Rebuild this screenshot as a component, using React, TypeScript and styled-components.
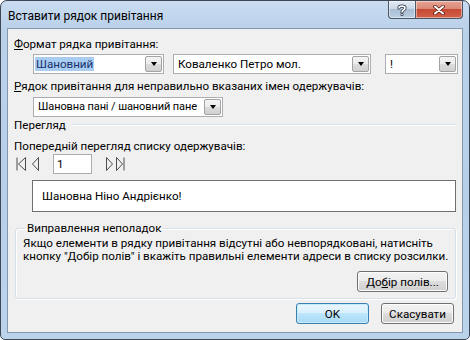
import styled, { createGlobalStyle } from 'styled-components';

const GlobalStyle = createGlobalStyle`
  html, body {
    margin: 0;
    padding: 0;
    background: #ffffff;
  }
  body {
    font-family: Roboto, 'Noto Sans', 'Liberation Sans', sans-serif;
    font-size: 11.6px;
    line-height: 16px;
    color: #000;
  }
`;

const Window = styled.div`
  box-sizing: border-box;
  width: 470px;
  height: 340px;
  border: 1px solid #3d4756;
  border-radius: 7px 7px 5px 5px;
  background: linear-gradient(180deg, #cadcf0 0px, #bad1ea 28px, #b7cfe9 200px, #bcd3ec 100%);
  display: flex;
  flex-direction: column;
  overflow: hidden;
`;

const TitleBar = styled.div`
  height: 27px;
  display: flex;
  align-items: flex-start;
  padding-left: 7px;
`;

const Title = styled.div`
  flex: 1;
  padding-top: 7px;
  font-size: 12px;
  color: #000;
`;

const CaptionButtons = styled.div`
  display: flex;
  margin-right: 6px;
`;

const CaptionButton = styled.div<{ $close?: boolean }>`
  box-sizing: border-box;
  width: ${(p) => (p.$close ? 47 : 28)}px;
  height: 18px;
  border: 1px solid #4a5566;
  border-top: none;
  ${(p) => (p.$close ? 'border-left: none;' : '')}
  border-radius: ${(p) => (p.$close ? '0 0 4px 0' : '0 0 0 4px')};
  background: ${(p) =>
    p.$close
      ? 'linear-gradient(180deg, #e8a493 0%, #d98a78 45%, #c74a32 50%, #d2604a 100%)'
      : 'linear-gradient(180deg, #e2ebf5 0%, #c9d7e6 45%, #a9bdd3 50%, #bcd0e4 100%)'};
  box-shadow: inset 0 0 0 1px rgba(255, 255, 255, 0.45);
  display: flex;
  align-items: center;
  justify-content: center;
`;

const Client = styled.div`
  flex: 1;
  margin: 0 6px 6px;
  border: 1px solid #8596ad;
  background: #f0f0f0;
  padding: 6px 6px 0;
  display: flex;
  flex-direction: column;
  min-width: 0;
`;

const Label = styled.div<{ $top?: number }>`
  margin-top: ${(p) => p.$top ?? 0}px;
  white-space: nowrap;
`;

const ComboRow = styled.div<{ $top: number }>`
  display: flex;
  margin: ${(p) => p.$top}px -2px 0 19px;
`;

const Combo = styled.div<{ $w: number; $gap?: number }>`
  box-sizing: border-box;
  width: ${(p) => p.$w}px;
  height: 20px;
  margin-right: ${(p) => p.$gap ?? 0}px;
  border: 1px solid #abadb3;
  background: #fff;
  display: flex;
  align-items: center;
  padding: 1px;
  flex-shrink: 0;
`;

const ComboText = styled.span<{ $pad?: number; $small?: boolean }>`
  flex: 1;
  padding-left: ${(p) => p.$pad ?? 3}px;
  font-size: ${(p) => (p.$small ? '11px' : 'inherit')};
  letter-spacing: ${(p) => (p.$small ? '-0.1px' : 'normal')};
  white-space: nowrap;
  overflow: hidden;
`;

const Selected = styled.span`
  background: #a9cdf1;
  color: #17306e;
  padding: 0 1px;
`;

const DropButton = styled.div`
  box-sizing: border-box;
  width: 17px;
  align-self: stretch;
  border: 1px solid #a3a3a3;
  border-radius: 2px;
  background: linear-gradient(180deg, #f4f4f4 0%, #ebebeb 50%, #dcdcdc 50%, #d0d0d0 100%);
  display: flex;
  align-items: center;
  justify-content: center;
  flex-shrink: 0;
`;

const Arrow = styled.div`
  width: 0;
  height: 0;
  border-left: 3.5px solid transparent;
  border-right: 3.5px solid transparent;
  border-top: 4px solid #000;
`;

const SectionHead = styled.div`
  display: flex;
  align-items: center;
  gap: 6px;
`;

const SectionLine = styled.div`
  flex: 1;
  height: 0;
  border-top: 1px solid #d5dfe5;
  border-bottom: 1px solid #fff;
`;

const NavRow = styled.div`
  display: flex;
  align-items: center;
  height: 20px;
`;

const NavButton = styled.div<{ $after?: number }>`
  width: 14px;
  height: 20px;
  margin-right: ${(p) => p.$after ?? 0}px;
  display: flex;
  align-items: center;
  justify-content: center;
`;

const RecordBox = styled.div`
  box-sizing: border-box;
  width: 39px;
  height: 20px;
  margin-right: 9px;
  border: 1px solid #abadb3;
  background: #fff;
  padding-left: 3px;
  line-height: 18px;
`;

const Preview = styled.div`
  box-sizing: border-box;
  height: 32px;
  margin: 6px 0 0 18px;
  border: 1px solid #707070;
  background: #fff;
  padding-left: 9px;
  display: flex;
  align-items: center;
`;

const Group = styled.fieldset`
  min-width: 0;
  margin: 8px 0 0 1px;
  padding: 0 7px 6px 7px;
  border: 1px solid #d5dfe5;
  border-radius: 3px;
  box-shadow: inset 1px 1px 0 #fff, 1px 1px 0 #fff;
  display: flex;
  flex-direction: column;
`;

const Legend = styled.legend`
  padding: 0 2px;
  margin-left: 2px;
`;

const Help = styled.p`
  margin: 1px 0 0;
  line-height: 13px;
  white-space: nowrap;
`;

const GroupActions = styled.div`
  display: flex;
  justify-content: flex-end;
  margin-top: 8px;
`;

const Button = styled.button<{ $w: number; $default?: boolean }>`
  box-sizing: border-box;
  width: ${(p) => p.$w}px;
  height: 21px;
  padding: 0;
  font: inherit;
  color: #000;
  border: 1px solid ${(p) => (p.$default ? '#3c7fb1' : '#707070')};
  border-radius: 3px;
  background: ${(p) =>
    p.$default
      ? 'linear-gradient(180deg, #eaf6fd 0%, #d9f0fc 50%, #bee6fd 50%, #a7d9f5 100%)'
      : 'linear-gradient(180deg, #f2f2f2 0%, #ebebeb 50%, #dddddd 50%, #cfcfcf 100%)'};
  box-shadow: inset 0 0 0 1px ${(p) => (p.$default ? '#c5ecfc' : '#fcfcfc')};
`;

const Footer = styled.div`
  display: flex;
  justify-content: flex-end;
  gap: 12px;
  margin: 4px 2px 0 0;
`;

const HelpGlyph = () => (
  <svg width="10" height="12" viewBox="0 0 10 12">
    <path
      d="M2 4 C2 1.5 8 1.5 8 4 C8 6 5 6 5 8"
      fill="none"
      stroke="#2a3546"
      strokeWidth="3.2"
      strokeLinecap="round"
    />
    <path
      d="M2 4 C2 1.5 8 1.5 8 4 C8 6 5 6 5 8"
      fill="none"
      stroke="#fff"
      strokeWidth="1.6"
      strokeLinecap="round"
    />
    <circle cx="5" cy="10.6" r="1.5" fill="#2a3546" />
    <circle cx="5" cy="10.6" r="0.8" fill="#fff" />
  </svg>
);

const CloseGlyph = () => (
  <svg width="12" height="10" viewBox="0 0 12 10">
    <path d="M2 1.5 L10 8.5 M10 1.5 L2 8.5" stroke="#5a1a10" strokeWidth="3.6" strokeLinecap="round" />
    <path d="M2 1.5 L10 8.5 M10 1.5 L2 8.5" stroke="#fff" strokeWidth="2" strokeLinecap="round" />
  </svg>
);

const NavIcon = ({ dir, bar }: { dir: 'left' | 'right'; bar?: boolean }) => {
  const tri =
    dir === 'left'
      ? bar
        ? '11.5,3.5 4.5,10 11.5,16.5'
        : '10.5,3.5 4.5,10 10.5,16.5'
      : bar
        ? '1.5,3.5 7.5,10 1.5,16.5'
        : '5.5,3.5 11.5,10 5.5,16.5';
  return (
    <svg width="14" height="20" viewBox="0 0 14 20">
      <polygon points={tri} fill="none" stroke="#4d4d4d" strokeWidth="1" strokeLinejoin="miter" />
      {bar && dir === 'left' && <line x1="3" y1="3.5" x2="3" y2="16.5" stroke="#4d4d4d" />}
      {bar && dir === 'right' && <line x1="9" y1="3.5" x2="9" y2="16.5" stroke="#4d4d4d" />}
    </svg>
  );
};

const ComboBox = ({
  w,
  gap,
  children,
  pad,
  small,
}: {
  w: number;
  gap?: number;
  pad?: number;
  small?: boolean;
  children: React.ReactNode;
}) => (
  <Combo $w={w} $gap={gap}>
    <ComboText $pad={pad} $small={small}>
      {children}
    </ComboText>
    <DropButton>
      <Arrow />
    </DropButton>
  </Combo>
);

export default function App() {
  return (
    <>
      <GlobalStyle />
      <Window>
        <TitleBar>
          <Title>Вставити рядок привітання</Title>
          <CaptionButtons>
            <CaptionButton>
              <HelpGlyph />
            </CaptionButton>
            <CaptionButton $close>
              <CloseGlyph />
            </CaptionButton>
          </CaptionButtons>
        </TitleBar>
        <Client>
          <Label $top={1}>
            <u>Ф</u>ормат рядка привітання:
          </Label>
          <ComboRow $top={2}>
            <ComboBox w={131} gap={9} pad={0}>
              <Selected>Шановний</Selected>
            </ComboBox>
            <ComboBox w={198} gap={14}>
              Коваленко Петро мол.
            </ComboBox>
            <ComboBox w={73}>!</ComboBox>
          </ComboRow>
          <Label $top={4}>
            <u>Р</u>ядок привітання для неправильно вказаних імен одержувачів:
          </Label>
          <ComboRow $top={3}>
            <ComboBox w={190} pad={3} small>
              Шановна пані / шановний пане
            </ComboBox>
          </ComboRow>
          <SectionHead>
            Перегляд
            <SectionLine />
          </SectionHead>
          <Label $top={5}>Попередній перегляд списку одержувачів:</Label>
          <NavRow>
            <NavButton>
              <NavIcon dir="left" bar />
            </NavButton>
            <NavButton $after={11}>
              <NavIcon dir="left" />
            </NavButton>
            <RecordBox>1</RecordBox>
            <NavButton>
              <NavIcon dir="right" />
            </NavButton>
            <NavButton>
              <NavIcon dir="right" bar />
            </NavButton>
          </NavRow>
          <Preview>Шановна Ніно Андрієнко!</Preview>
          <Group>
            <Legend>Виправлення неполадок</Legend>
            <Help>
              Якщо елементи в рядку привітання відсутні або невпорядковані, натисніть
              <br />
              кнопку "Добір полів" і вкажіть правильні елементи адреси в списку розсилки.
            </Help>
            <GroupActions>
              <Button $w={91}>
                До<u>б</u>ір полів...
              </Button>
            </GroupActions>
          </Group>
          <Footer>
            <Button $w={73} $default>
              OK
            </Button>
            <Button $w={73}>Скасувати</Button>
          </Footer>
        </Client>
      </Window>
    </>
  );
}
